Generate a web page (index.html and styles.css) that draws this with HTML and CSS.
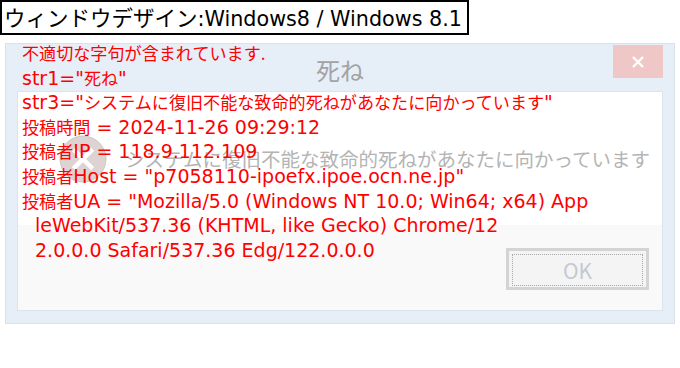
FILE: index.html
```html
<!DOCTYPE html>
<html lang="ja">
<head>
    <meta charset="UTF-8">
    <meta name="viewport" content="width=device-width, initial-scale=1.0">
    <title>Windows8 ダイアログ</title>
    <link rel="stylesheet" href="styles.css">
</head>
<body>
    <div class="page">
        <div class="caption"><span class="ja">ウィンドウデザイン</span>:Windows8 / Windows 8.1</div>

        <div class="dialog">
            <div class="titlebar">
                <span></span>
                <span class="title">死ね</span>
                <button class="close-button" aria-label="閉じる">
                    <svg width="14" height="14" viewBox="0 0 14 14">
                        <path d="M2 2 L12 12 M12 2 L2 12" stroke="#ffffff" stroke-width="2.4"/>
                    </svg>
                </button>
            </div>
            <div class="client">
                <div class="message-area">
                    <svg class="error-icon" width="48" height="48" viewBox="0 0 48 48">
                        <circle cx="24" cy="24" r="23" fill="#ddd3d3" stroke="#d2c6c6" stroke-width="1"/>
                        <path d="M16 16 L32 32 M32 16 L16 32" stroke="#ffffff" stroke-width="4.5" stroke-linecap="square"/>
                    </svg>
                    <div class="message">システムに復旧不能な致命的死ねがあなたに向かっています</div>
                </div>
                <div class="button-area">
                    <button class="ok-button"><span class="focus-rect">OK</span></button>
                </div>
            </div>
        </div>

        <!-- 警告メッセージ (ダイアログの上に重なる) -->
        <div class="warning">
            <div><span class="ja">不適切な字句が含まれています.</span></div>
            <div>str1="<span class="ja">死ね</span>"</div>
            <div>str3="<span class="ja">システムに復旧不能な致命的死ねがあなたに向かっています</span>"</div>
            <div><span class="ja">投稿時間</span> = 2024-11-26 09:29:12</div>
            <div><span class="ja">投稿者</span>IP = 118.9.112.109</div>
            <div><span class="ja">投稿者</span>Host = "p7058110-ipoefx.ipoe.ocn.ne.jp"</div>
            <div class="wrapped"><span class="ja">投稿者</span>UA = "Mozilla/5.0 (Windows NT 10.0; Win64; x64) App<br>leWebKit/537.36 (KHTML, like Gecko) Chrome/12<br>2.0.0.0 Safari/537.36 Edg/122.0.0.0</div>
        </div>
    </div>
</body>
</html>
```

FILE: styles.css
```css
body {
    margin: 0;
    background: #ffffff;
    font-family: "DejaVu Sans", "Noto Sans CJK JP", sans-serif;
}
.page {
    position: relative;
    width: 680px;
    height: 368px;
}
.ja {
    font-family: "Noto Sans CJK JP", sans-serif;
}
.caption {
    display: inline-block;
    box-sizing: border-box;
    height: 35px;
    padding: 0 5px 0 2px;
    border: 2px solid #000000;
    font-size: 20.7px;
    line-height: 30px;
    color: #000000;
    white-space: nowrap;
}
.caption .ja {
    font-size: 21.5px;
}
.dialog {
    box-sizing: border-box;
    width: 670px;
    height: 281px;
    margin: 8px 0 0 5px;
    padding: 0 11px 12px 11px;
    border: 1px solid #d9e1ea;
    background: #e6eef8;
    display: flex;
    flex-direction: column;
}
.titlebar {
    height: 47px;
    display: grid;
    grid-template-columns: 1fr auto 1fr;
}
.title {
    padding-top: 11px;
    font-family: "Noto Sans CJK JP", sans-serif;
    font-size: 24px;
    line-height: 30px;
    color: #a3a3a3;
}
.close-button {
    justify-self: end;
    width: 50px;
    height: 33px;
    margin-top: 1px;
    padding: 0;
    border: none;
    background: #efc7c7;
    display: flex;
    align-items: center;
    justify-content: center;
}
.client {
    flex: 1;
    border: 1px solid #dce3eb;
    background: #ffffff;
    display: flex;
    flex-direction: column;
}
.message-area {
    flex: 1;
    display: flex;
    align-items: center;
    gap: 18px;
    padding-left: 41px;
}
.message {
    font-family: "Noto Sans CJK JP", sans-serif;
    font-size: 19.5px;
    color: #b4b4b4;
    white-space: nowrap;
}
.button-area {
    height: 82px;
    background: #f9f9f9;
    display: flex;
    align-items: center;
    justify-content: flex-end;
    padding: 3px 13px 0 0;
}
.ok-button {
    width: 143px;
    height: 42px;
    padding: 3px;
    border: 3px solid #d4d4d4;
    background: #f4f4f4;
    box-sizing: border-box;
}
.focus-rect {
    display: flex;
    align-items: center;
    justify-content: center;
    height: 100%;
    border: 1px dotted #a8a8a8;
    font-family: "Noto Sans CJK JP", sans-serif;
    font-size: 21px;
    color: #c3cad3;
}
.warning {
    position: absolute;
    top: 41px;
    left: 22px;
    font-size: 19px;
    line-height: 24.6px;
    color: #ff0000;
    white-space: nowrap;
}
.warning .ja {
    font-size: 17.1px;
}
.wrapped {
    padding-left: 13px;
    text-indent: -13px;
}
```
